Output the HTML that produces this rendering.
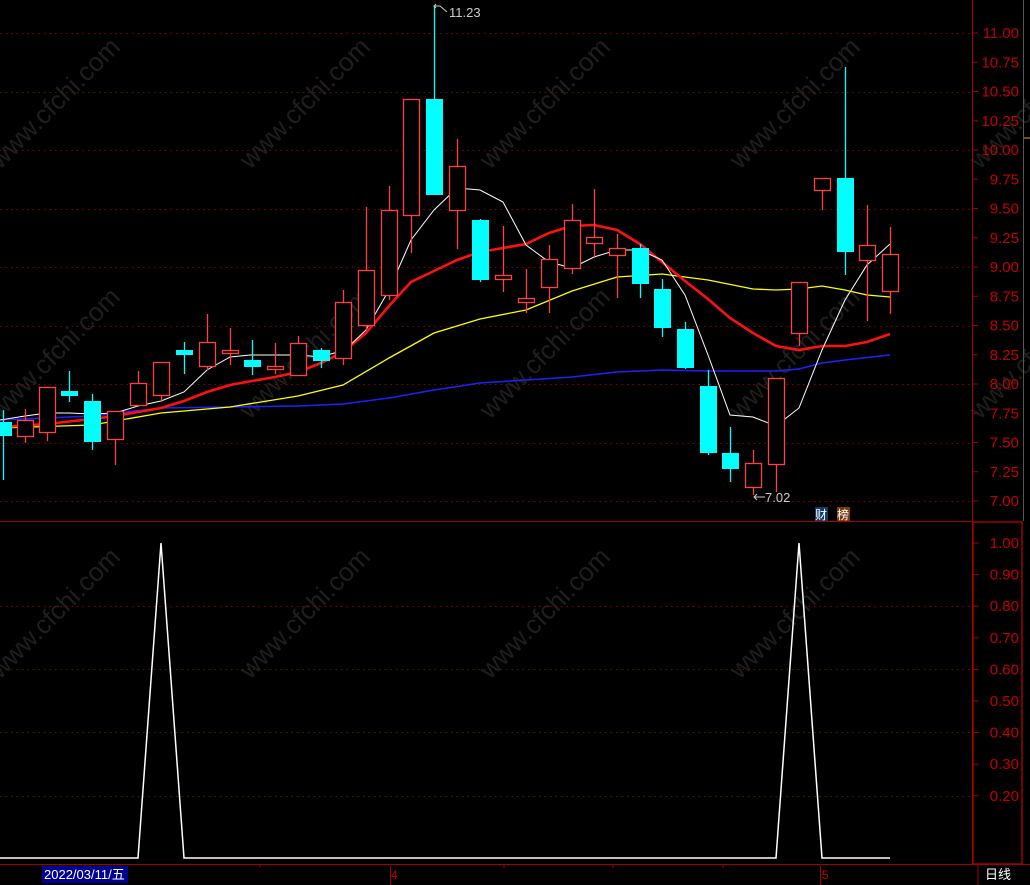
<!DOCTYPE html>
<html><head><meta charset="utf-8"><style>
html,body{margin:0;padding:0;background:#000;width:1030px;height:885px;overflow:hidden}
svg{display:block}
text{font-family:"Liberation Sans","Noto Sans CJK SC",sans-serif}
</style></head><body>
<svg id="s" width="1030" height="885" xmlns="http://www.w3.org/2000/svg">
<g id="wm" fill="#1e1e1e" font-size="26"></g>
<g id="grid"></g>
<g id="lines"></g>
<g id="candles"></g>
<line x1="972.5" y1="0" x2="972.5" y2="864" stroke="#a00000"/>
<line x1="0" y1="521.5" x2="972" y2="521.5" stroke="#a00000"/>
<rect x="973" y="522" width="49" height="342" fill="none" stroke="#a00000" stroke-width="1.5"/>
<line x1="1023.5" y1="0" x2="1023.5" y2="521" stroke="#555"/>
<line x1="1024" y1="138" x2="1030" y2="138" stroke="#e8a030"/>
<line x1="0" y1="864.5" x2="1030" y2="864.5" stroke="#a00000"/>
<line x1="978" y1="864" x2="978" y2="885" stroke="#a00000"/>
<g id="axis" fill="#c00000" font-size="15"></g>
<rect x="42" y="866" width="86" height="17" fill="#000090"/>
<text x="44" y="879" fill="#fff" font-size="13">2022/03/11/五</text>
<line x1="390.5" y1="866" x2="390.5" y2="885" stroke="#a00000"/>
<text x="391" y="879" fill="#c00000" font-size="12">4</text>
<line x1="820.5" y1="866" x2="820.5" y2="885" stroke="#a00000"/>
<text x="822" y="879" fill="#c00000" font-size="12">5</text>
<line x1="260" y1="864" x2="260" y2="868" stroke="#a00000"/>
<line x1="504" y1="864" x2="504" y2="868" stroke="#a00000"/>
<line x1="613" y1="864" x2="613" y2="868" stroke="#a00000"/>
<line x1="723" y1="864" x2="723" y2="868" stroke="#a00000"/>
<text x="985" y="879" fill="#fff" font-size="13">日线</text>
<path d="M434 6 L440 6 M436 4 L434 6 L436 8 M440 6 L447 12" stroke="#ccc" fill="none"/>
<text x="449" y="17" fill="#ccc" font-size="13">11.23</text>
<path d="M754 497 L765 497 M757 494 L754 497 L757 500" stroke="#ccc" fill="none"/>
<text x="765" y="502" fill="#ccc" font-size="13">7.02</text>
<rect x="815" y="507" width="13" height="14" fill="#103a6a"/>
<text x="815" y="519" fill="#fff" font-size="12">财</text>
<rect x="837" y="507" width="13" height="14" fill="#7a3a10"/>
<text x="837" y="519" fill="#fff" font-size="12">榜</text>
<polyline points="0,858 138,858 161,543 184,858 776,858 799,543 822,858 890,858" fill="none" stroke="#fff" stroke-width="1.5"/>
</svg>
<script>
var NS="http://www.w3.org/2000/svg";
function el(p,t,a,txt){var e=document.createElementNS(NS,t);for(var k in a)e.setAttribute(k,a[k]);if(txt)e.textContent=txt;document.getElementById(p).appendChild(e);return e;}
[[0,170],[250,170],[490,170],[740,170],[0,420],[250,420],[490,420],[740,420],[0,680],[250,680],[490,680],[740,680],[980,170],[980,420]].forEach(function(p){
 el("wm","text",{x:p[0],y:p[1],transform:"rotate(-45 "+p[0]+" "+p[1]+")"},"www.cfchi.com");});
[33,91.5,150,208.5,267,325.5,384,442.5,501,606,669,732,796].forEach(function(y){
 el("grid","line",{x1:0,y1:Math.round(y)+.5,x2:972,y2:Math.round(y)+.5,stroke:"#8a0000","stroke-dasharray":"1.5 4"});});
for(var i=0;i<=16;i++){var p=11.0-i*0.25,y=33+i*29.25;
 el("axis","line",{x1:972,y1:y,x2:978,y2:y,stroke:"#a00000"});
 el("axis","text",{x:1019,y:y+5,"text-anchor":"end"},p.toFixed(2));}
for(var i=0;i<9;i++){var v=1.0-i*0.1,y=543+i*31.6;
 el("axis","line",{x1:973,y1:y,x2:979,y2:y,stroke:"#a00000"});
 el("axis","text",{x:1019,y:y+5,"text-anchor":"end"},v.toFixed(2));}
var C=[[3,'c',422,436,410,480],[25,'r',420,436,409,443],[47,'r',387,432,387,441],[69,'c',391,396,371,402],[92,'c',401,442,394,450],[115,'r',411,439,411,465],[138,'r',383,405,371,405],[161,'r',362,395,362,402],[184,'c',350,355,342,374],[207,'r',342,366,314,370],[230,'r',350,353,328,365],[252,'c',360,367,340,375],[275,'r',366,369,343,374],[298,'r',343,375,336,375],[321,'c',350,361,348,368],[343,'r',302,358,290,365],[366,'r',270,325,207,330],[389,'r',210,295,186,300],[411,'r',99,215,99,253],[434,'c',99,195,6,195],[457,'r',166,210,139,249],[480,'c',220,280,219,282],[503,'r',275,279,226,292],[526,'r',298,302,269,313],[549,'r',259,287,245,313],[572,'r',220,268,204,274],[594,'r',237,243,189,258],[617,'r',248,255,234,298],[640,'c',248,284,244,298],[662,'c',289,328,279,337],[685,'c',329,368,322,369],[708,'c',386,453,370,455],[730,'c',453,469,427,482],[753,'r',463,487,450,495],[776,'r',378,464,378,492],[799,'r',282,333,282,346],[822,'r',178,190,178,210],[845,'c',178,252,67,275],[867,'r',245,260,205,321],[890,'r',254,291,227,314]];
C.forEach(function(c){var x=c[0],col=c[1]=='c'?'#00ffff':'#ff4040';
 if(c[1]=='c'){el("candles","line",{x1:x+.5,y1:c[4],x2:x+.5,y2:c[5],stroke:col,"stroke-width":1.3});
  el("candles","rect",{x:x-8,y:c[2],width:17,height:Math.max(2,c[3]-c[2]),fill:col});}
 else{el("candles","line",{x1:x+.5,y1:c[4],x2:x+.5,y2:c[2],stroke:col,"stroke-width":1.3});
  el("candles","line",{x1:x+.5,y1:c[3],x2:x+.5,y2:c[5],stroke:col,"stroke-width":1.3});
  el("candles","rect",{x:x-7.5,y:c[2]+.5,width:16,height:Math.max(2,c[3]-c[2]),fill:"#000",stroke:col,"stroke-width":1.3});}
});
function pl(pts,col,w){el("lines","polyline",{points:pts,fill:"none",stroke:col,"stroke-width":w});}
pl("0,420 92,416 161,408 230,407 298,406 343,404 389,398 434,390 480,383 526,380 572,377 617,372 662,370 708,371 776,371 799,369 822,363 845,360 890,355","#2020ff",1.5);
pl("0,428 92,425 161,413 230,407 298,396 343,385 389,358 434,333 480,319 526,310 572,291 617,277 662,274 708,280 753,289 776,290 799,289 822,286 845,290 867,295 890,297","#ffff00",1.3);
pl("0,427 47,424 92,419 115,416 138,412 161,408 184,401 207,392 230,385 252,381 275,377 298,372 321,363 343,352 366,333 389,306 411,282 434,271 457,260 480,252 503,248 526,244 549,233 572,226 594,225 617,230 640,244 662,262 685,281 708,299 730,318 753,333 776,346 799,350 822,346 845,346 867,342 890,334","#ff1010",2.6);
pl("0,420 25,416 47,413 69,413 92,414 115,413 138,406 161,401 184,392 207,370 230,357 250,355 300,355 320,357 345,350 366,330 389,290 411,240 434,210 457,188 480,190 503,202 526,245 549,262 572,268 594,257 617,250 640,250 662,260 685,295 708,355 730,415 753,417 776,426 799,408 822,350 845,300 867,265 890,244","#ffffff",1);
</script>
</body></html>
